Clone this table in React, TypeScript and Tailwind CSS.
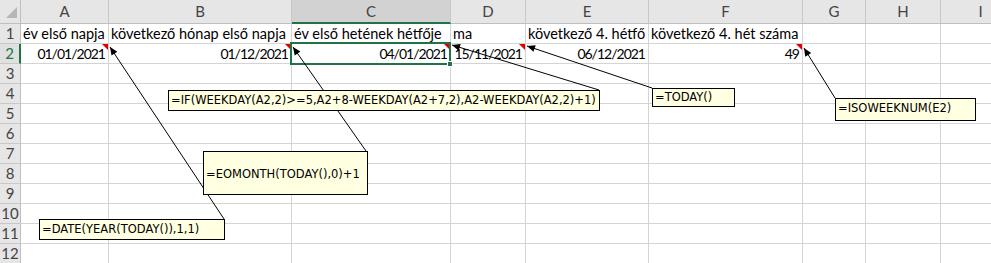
const colWidths = [88, 183, 159, 75, 123, 154, 63, 75, 80];
const colNames = ["A", "B", "C", "D", "E", "F", "G", "H", "I"];

// Row 1 headings and row 2 values; the booleans mark cells carrying a note.
const row1 = [
  "év első napja",
  "következő hónap első napja",
  "év első hetének hétfője",
  "ma",
  "következő 4. hétfő",
  "következő 4. hét száma",
  "",
  "",
  "",
];
const row2 = ["01/01/2021", "01/12/2021", "04/01/2021", "15/11/2021", "06/12/2021", "49", "", "", ""];
const hasNote = [true, true, true, true, false, true, false, false, false];

const rowCount = 12;
const cellFont = { fontFamily: "Lato, 'Open Sans', sans-serif" };

// Note boxes floating over the sheet
const notes = [
  { text: "=IF(WEEKDAY(A2,2)>=5,A2+8-WEEKDAY(A2+7,2),A2-WEEKDAY(A2,2)+1)", cls: "left-[168px] top-[90px] w-[432px] h-[21px] pt-[2px]" },
  { text: "=TODAY()", cls: "left-[652px] top-[88px] w-[83px] h-[19px] pt-[1px]" },
  { text: "=ISOWEEKNUM(E2)", cls: "left-[835px] top-[98px] w-[141px] h-[23px] pt-[2px]" },
  { text: "=EOMONTH(TODAY(),0)+1", cls: "left-[203px] top-[151px] w-[165px] h-[44px] pt-[15px]" },
  { text: "=DATE(YEAR(TODAY()),1,1)", cls: "left-[39px] top-[219px] w-[186px] h-[21px] pt-[2px]" },
];

// Arrow from the cell corner (tip) to its note box
const arrows: [number, number, number, number][] = [
  [110, 47, 224, 219],
  [293, 47, 366, 151],
  [452, 45, 599, 90],
  [527, 46, 652, 88],
  [804, 48, 835, 98],
];

function arrowHead(x1: number, y1: number, x2: number, y2: number) {
  const len = Math.hypot(x2 - x1, y2 - y1);
  const ux = (x2 - x1) / len;
  const uy = (y2 - y1) / len;
  const bx = x1 + ux * 8;
  const by = y1 + uy * 8;
  const px = -uy * 3.5;
  const py = ux * 3.5;
  return `${x1},${y1} ${bx + px},${by + py} ${bx - px},${by - py}`;
}

function NoteMark() {
  return (
    <span className="absolute right-0 top-0 w-0 h-0 border-t-[6px] border-t-[#e00000] border-l-[6px] border-l-transparent" />
  );
}

export default function App() {
  return (
    <div className="relative w-[991px] h-[263px] overflow-hidden bg-white text-black" style={cellFont}>
      <div className="grid grid-cols-[21px_88px_183px_159px_75px_123px_154px_63px_75px_80px] grid-rows-[24px_repeat(12,20px)]">
        {/* corner */}
        <div className="bg-[#e6e6e6] border-r border-b border-[#bfbfbf] relative">
          <svg className="absolute inset-0" width="21" height="24">
            <polygon points="6,18 17,18 17,7" fill="#b6b6b6" />
          </svg>
        </div>
        {colNames.map((c, i) => (
          <div
            key={c}
            className={`flex items-center justify-center text-[15px] text-[#444] border-r border-[#c8c8c8] ${
              i === 2 ? "bg-[#d2d2d2] border-b-2 border-b-[#217346]" : "bg-[#e6e6e6] border-b border-b-[#bfbfbf]"
            }`}
          >
            {c}
          </div>
        ))}

        {Array.from({ length: rowCount }, (_, r) => {
          const n = r + 1;
          return [
            <div
              key={`h${n}`}
              className={`flex items-center justify-center text-[15px] border-b border-[#c8c8c8] ${
                n === 2
                  ? "bg-[#e0e0e0] text-[#217346] border-r-2 border-r-[#217346]"
                  : "bg-[#e6e6e6] text-[#444] border-r border-r-[#bfbfbf]"
              }`}
            >
              {n}
            </div>,
            ...colWidths.map((_, c) => {
              const text = n === 1 ? row1[c] : n === 2 ? row2[c] : "";
              return (
                <div
                  key={`${n}-${c}`}
                  className={`relative flex items-center border-r border-b border-[#d4d4d4] whitespace-nowrap ${
                    n === 2 ? "justify-end pr-[3px] text-[14px] tracking-[-1px]" : "pl-[2px] text-[14.5px]"
                  }`}
                >
                  {text}
                  {n === 2 && hasNote[c] && <NoteMark />}
                </div>
              );
            }),
          ];
        })}
      </div>

      {/* active cell C2 */}
      <div className="absolute left-[290px] top-[42px] w-[161px] h-[23px] border-2 border-[#217346]" />
      <div className="absolute left-[447px] top-[61px] w-[6px] h-[6px] bg-[#217346] border border-white" />

      {/* note arrows */}
      <svg className="absolute inset-0 pointer-events-none" width="991" height="263">
        {arrows.map(([x1, y1, x2, y2], i) => (
          <g key={i}>
            <line x1={x1} y1={y1} x2={x2} y2={y2} stroke="#000" strokeWidth="1" />
            <polygon points={arrowHead(x1, y1, x2, y2)} fill="#000" />
          </g>
        ))}
      </svg>

      {notes.map((n) => (
        <div
          key={n.text}
          className={`absolute ${n.cls} bg-[#ffffe1] border border-black pl-[2px] text-[11.5px] leading-[15px] whitespace-nowrap`}
          style={{ fontFamily: "'DejaVu Sans', sans-serif" }}
        >
          {n.text}
        </div>
      ))}
    </div>
  );
}
